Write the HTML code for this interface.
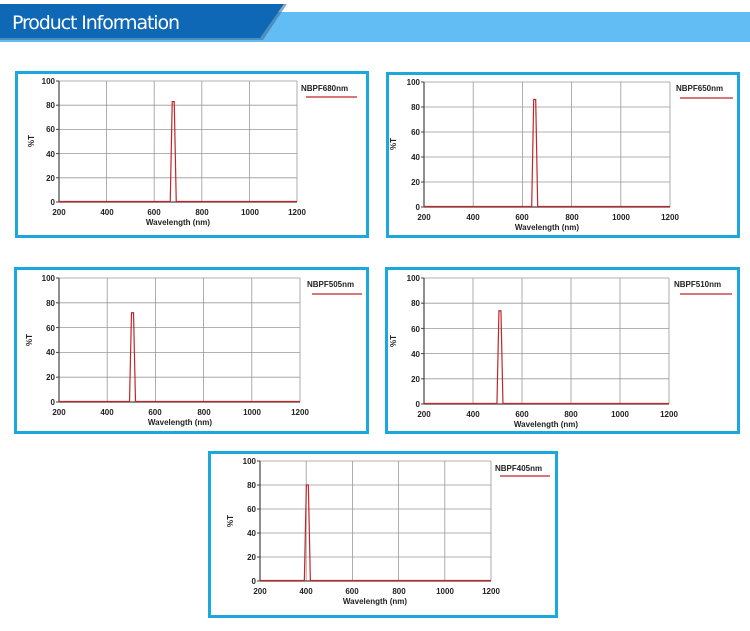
<!DOCTYPE html>
<html><head><meta charset="utf-8"><style>
html,body{margin:0;padding:0;background:#fff;width:750px;height:631px;overflow:hidden}
svg text{font-family:"Liberation Sans",Arial,sans-serif}
.t{font-size:8px;font-weight:bold;fill:#222}
</style></head><body>
<svg id="s" width="750" height="631" viewBox="0 0 750 631" xmlns="http://www.w3.org/2000/svg">
<rect x="0" y="12" width="750" height="30" fill="#62bdf5"/>
<polygon points="0,4 284,4 260,38 0,38" fill="#0f68b5"/>
<polygon points="260,38 284,4 287,4 263,40 0,40 0,38" fill="#3d6f97" opacity="0.6"/>
<text x="12" y="29" fill="#fff" font-size="19" style="font-family:'DejaVu Sans','Liberation Sans',sans-serif" textLength="168">Product  Information</text>
<g fill="none" stroke="#1ca8dc" stroke-width="3">
<rect x="16.5" y="72.5" width="351" height="164"/>
<rect x="387.5" y="73.5" width="351" height="163"/>
<rect x="15.5" y="268.5" width="352" height="164"/>
<rect x="386.5" y="268.5" width="352" height="164"/>
<rect x="209.5" y="452.5" width="347" height="164"/>
</g>
<g id="grids"></g>
<g class="t">
<!-- P1 -->
<text x="55" y="84" text-anchor="end">100</text><text x="55" y="108" text-anchor="end">80</text><text x="55" y="132" text-anchor="end">60</text><text x="55" y="157" text-anchor="end">40</text><text x="55" y="181" text-anchor="end">20</text><text x="55" y="205" text-anchor="end">0</text>
<text x="59" y="215" text-anchor="middle">200</text><text x="107" y="215" text-anchor="middle">400</text><text x="154" y="215" text-anchor="middle">600</text><text x="202" y="215" text-anchor="middle">800</text><text x="250" y="215" text-anchor="middle">1000</text><text x="297" y="215" text-anchor="middle">1200</text>
<text x="178" y="225" text-anchor="middle">Wavelength (nm)</text>
<text transform="translate(34,141) rotate(-90)" text-anchor="middle">%T</text>
<text x="301" y="91">NBPF680nm</text>
<!-- P2 -->
<text x="420" y="85" text-anchor="end">100</text><text x="420" y="110" text-anchor="end">80</text><text x="420" y="135" text-anchor="end">60</text><text x="420" y="160" text-anchor="end">40</text><text x="420" y="185" text-anchor="end">20</text><text x="420" y="210" text-anchor="end">0</text>
<text x="424" y="220" text-anchor="middle">200</text><text x="473" y="220" text-anchor="middle">400</text><text x="522" y="220" text-anchor="middle">600</text><text x="572" y="220" text-anchor="middle">800</text><text x="621" y="220" text-anchor="middle">1000</text><text x="670" y="220" text-anchor="middle">1200</text>
<text x="547" y="230" text-anchor="middle">Wavelength (nm)</text>
<text transform="translate(396,144) rotate(-90)" text-anchor="middle">%T</text>
<text x="676" y="91">NBPF650nm</text>
<!-- P3 -->
<text x="55" y="281" text-anchor="end">100</text><text x="55" y="306" text-anchor="end">80</text><text x="55" y="331" text-anchor="end">60</text><text x="55" y="355" text-anchor="end">40</text><text x="55" y="380" text-anchor="end">20</text><text x="55" y="405" text-anchor="end">0</text>
<text x="59" y="415" text-anchor="middle">200</text><text x="107" y="415" text-anchor="middle">400</text><text x="155" y="415" text-anchor="middle">600</text><text x="204" y="415" text-anchor="middle">800</text><text x="252" y="415" text-anchor="middle">1000</text><text x="300" y="415" text-anchor="middle">1200</text>
<text x="180" y="425" text-anchor="middle">Wavelength (nm)</text>
<text transform="translate(32,340) rotate(-90)" text-anchor="middle">%T</text>
<text x="307" y="287">NBPF505nm</text>
<!-- P4 -->
<text x="420" y="281" text-anchor="end">100</text><text x="420" y="306" text-anchor="end">80</text><text x="420" y="332" text-anchor="end">60</text><text x="420" y="357" text-anchor="end">40</text><text x="420" y="382" text-anchor="end">20</text><text x="420" y="407" text-anchor="end">0</text>
<text x="424" y="417" text-anchor="middle">200</text><text x="473" y="417" text-anchor="middle">400</text><text x="522" y="417" text-anchor="middle">600</text><text x="571" y="417" text-anchor="middle">800</text><text x="620" y="417" text-anchor="middle">1000</text><text x="669" y="417" text-anchor="middle">1200</text>
<text x="546" y="427" text-anchor="middle">Wavelength (nm)</text>
<text transform="translate(396,341) rotate(-90)" text-anchor="middle">%T</text>
<text x="674" y="287">NBPF510nm</text>
<!-- P5 -->
<text x="256" y="464" text-anchor="end">100</text><text x="256" y="488" text-anchor="end">80</text><text x="256" y="512" text-anchor="end">60</text><text x="256" y="536" text-anchor="end">40</text><text x="256" y="560" text-anchor="end">20</text><text x="256" y="584" text-anchor="end">0</text>
<text x="260" y="594" text-anchor="middle">200</text><text x="306" y="594" text-anchor="middle">400</text><text x="352" y="594" text-anchor="middle">600</text><text x="399" y="594" text-anchor="middle">800</text><text x="445" y="594" text-anchor="middle">1000</text><text x="491" y="594" text-anchor="middle">1200</text>
<text x="375" y="604" text-anchor="middle">Wavelength (nm)</text>
<text transform="translate(233,521) rotate(-90)" text-anchor="middle">%T</text>
<text x="495" y="471">NBPF405nm</text>
</g>
<g stroke="#c0262b" stroke-width="1.2" fill="none">
<line x1="306" y1="97" x2="357" y2="97"/>
<line x1="680" y1="98" x2="733" y2="98"/>
<line x1="312" y1="294" x2="362" y2="294"/>
<line x1="680" y1="294" x2="732" y2="294"/>
<line x1="500" y1="476" x2="550" y2="476"/>
</g>
</svg>
<script>
var P=[[59,297,81,202,680,83],[424,670,82,207,650,86],[59,300,278,402,505,72],[424,669,278,404,510,74],[260,491,461,581,405,80]];
var g=document.getElementById('grids'),h='';
P.forEach(function(p){var x0=p[0],x1=p[1],yt=p[2],yb=p[3];
for(var i=1;i<=5;i++){var x=x0+(x1-x0)*i/5;h+='<line x1="'+x+'" y1="'+yt+'" x2="'+x+'" y2="'+yb+'" stroke="#999" stroke-width="0.8"/>';}
for(var j=0;j<5;j++){var y=yt+(yb-yt)*j/5;h+='<line x1="'+x0+'" y1="'+y+'" x2="'+x1+'" y2="'+y+'" stroke="#999" stroke-width="0.8"/>';}
for(var j=0;j<=5;j++){var y=yt+(yb-yt)*j/5;h+='<line x1="'+(x0-3)+'" y1="'+y+'" x2="'+x0+'" y2="'+y+'" stroke="#444"/>';}
h+='<line x1="'+x0+'" y1="'+yt+'" x2="'+x0+'" y2="'+yb+'" stroke="#444" stroke-width="1.2"/>';
h+='<line x1="'+x0+'" y1="'+yb+'" x2="'+x1+'" y2="'+yb+'" stroke="#444" stroke-width="1.2"/>';
var px=x0+(x1-x0)*(p[4]-200)/1000,py=yb-(yb-yt)*p[5]/100;
h+='<polyline points="'+x0+','+(yb-0.5)+' '+(px-3)+','+(yb-0.5)+' '+(px-1)+','+py+' '+(px+1)+','+py+' '+(px+3)+','+(yb-0.5)+' '+x1+','+(yb-0.5)+'" fill="none" stroke="#c0262b" stroke-width="1.2"/>';
});
g.innerHTML=h;
</script>
</body></html>
